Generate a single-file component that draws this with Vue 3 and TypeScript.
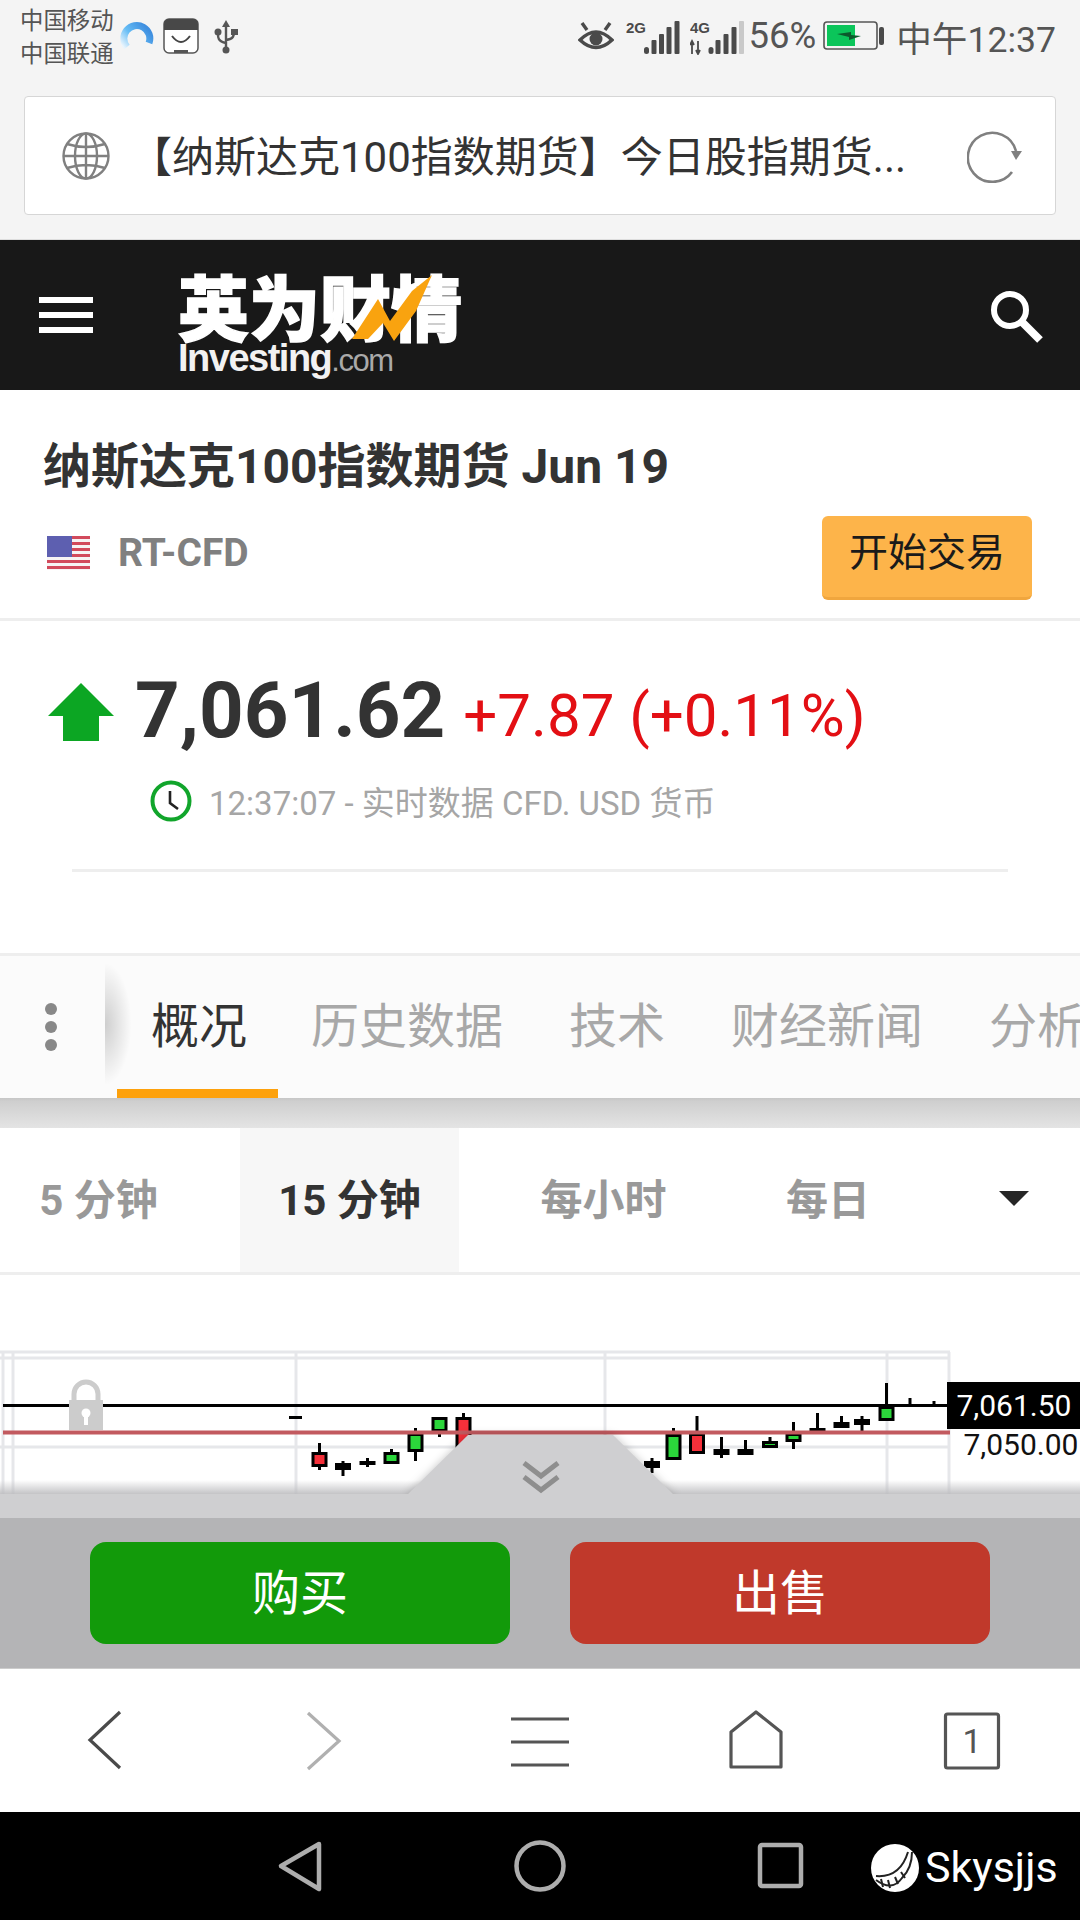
<template>
  <div class="page">
    <div class="top">
      <div class="status">
        <div class="status__left">
          <div class="carrier"><span>中国移动</span><span>中国联通</span></div>
          <svg class="ic-spin" width="34" height="36" viewBox="0 0 34 36">
            <defs>
              <linearGradient id="spin" x1="0" y1="1" x2="1" y2="0.3">
                <stop offset="0" stop-color="#e8f4fd" />
                <stop offset="0.45" stop-color="#66bdf5" />
                <stop offset="1" stop-color="#3f8fe0" />
              </linearGradient>
            </defs>
            <path d="M7 29 A13 13 0 1 1 29 25" fill="none" stroke="url(#spin)" stroke-width="7" />
          </svg>
          <svg class="ic-bag" width="36" height="36" viewBox="0 0 36 36">
            <rect x="1" y="1" width="34" height="34" rx="5" fill="#fff" stroke="#555" stroke-width="1.5" />
            <path d="M1 12 V6 a5 5 0 0 1 5 -5 h24 a5 5 0 0 1 5 5 v6 z" fill="#484848" />
            <path d="M9 18 Q18 30 27 18" fill="none" stroke="#444" stroke-width="2" />
            <rect x="11" y="32" width="14" height="3" fill="#555" />
          </svg>
          <svg class="ic-usb" width="24" height="34" viewBox="0 0 24 34">
            <path d="M12 5 V29 M12 23 C3 21 4 17 4 12 M12 20 C20 19 20 15 20 12" fill="none" stroke="#555" stroke-width="2.4" />
            <path d="M12 0 L16 7 H8 z" fill="#555" />
            <circle cx="4" cy="12" r="3.5" fill="#555" />
            <rect x="17" y="9" width="7" height="6" fill="#555" />
            <circle cx="12" cy="30" r="3.5" fill="#555" />
          </svg>
        </div>
        <div class="status__right">
          <svg class="ic-eye" width="36" height="32" viewBox="0 0 36 32">
            <path d="M2 20 Q18 4 34 20 Q18 35 2 20 z" fill="none" stroke="#4a4a4a" stroke-width="3.4" />
            <circle cx="18" cy="19" r="6.5" fill="#4a4a4a" />
            <path d="M4 3 L9 10 M32 3 L27 10" stroke="#4a4a4a" stroke-width="3.4" />
          </svg>
          <svg class="ic-sig" width="54" height="36" viewBox="0 0 54 36">
            <text x="0" y="14" class="sig-label">2G</text>
            <rect x="18" y="28" width="5" height="7" rx="2.5" fill="#4a4a4a" />
            <rect x="25.5" y="21" width="5" height="14" rx="1" fill="#4a4a4a" />
            <rect x="33" y="15" width="5" height="20" rx="1" fill="#4a4a4a" />
            <rect x="40.5" y="8" width="5" height="27" rx="1" fill="#4a4a4a" />
            <rect x="48.5" y="2" width="5" height="33" rx="1" fill="#4a4a4a" />
          </svg>
          <svg class="ic-sig ic-sig--b" width="54" height="36" viewBox="0 0 54 36">
            <text x="0" y="14" class="sig-label">4G</text>
            <path d="M2 35 V23 M0 26 L2 22 L4 26 M8 22 V34 M6 31 L8 35 L10 31" fill="none" stroke="#4a4a4a" stroke-width="1.8" />
            <rect x="18.5" y="28" width="5" height="7" rx="2.5" fill="#4a4a4a" />
            <rect x="25.5" y="21" width="5" height="14" rx="1" fill="#4a4a4a" />
            <rect x="33.5" y="15" width="5" height="20" rx="1" fill="#4a4a4a" />
            <rect x="41.5" y="8" width="5" height="27" rx="1" fill="#4a4a4a" />
            <rect x="49" y="2" width="5" height="33" rx="1" fill="#c9c9c9" />
          </svg>
          <span class="pct">56%</span>
          <svg class="ic-bat" width="62" height="30" viewBox="0 0 62 30">
            <rect x="1" y="1" width="53" height="27" rx="3" fill="none" stroke="#555" stroke-width="1.6" />
            <rect x="4" y="4" width="28" height="21" fill="#0bc55a" />
            <path d="M14 13 L28 11 L28 14 L38 15 L26 19 L26 16 z" fill="#0c5a2c" />
            <rect x="56" y="6" width="5" height="18" rx="2" fill="#4a4a4a" />
          </svg>
          <span class="clock-text">中午12:37</span>
        </div>
      </div>
      <div class="urlbar">
        <svg class="ic-globe" width="48" height="48" viewBox="0 0 48 48">
          <g fill="none" stroke="#808080" stroke-width="2.4">
            <circle cx="24" cy="24" r="22.5" />
            <ellipse cx="24" cy="24" rx="11" ry="22.5" />
            <path d="M24 1.5 V46.5 M1.5 24 H46.5 M5 12 Q24 18 43 12 M5 36 Q24 30 43 36" />
          </g>
        </svg>
        <span class="urlbar__text">【纳斯达克100指数期货】今日股指期货...</span>
        <svg class="ic-refresh" width="56" height="54" viewBox="0 0 56 54">
          <path d="M49 22 A24.5 24.5 0 1 0 45 43" fill="none" stroke="#808080" stroke-width="2.6" />
          <path d="M44 22 H55 L49 31 z" fill="#808080" />
        </svg>
      </div>
    </div>

    <header class="brand">
      <div class="burger"><i></i><i></i><i></i></div>
      <div class="logo">
        <div class="logo__cn">英为财情</div>
        <svg class="logo__bolt" width="84" height="68" viewBox="0 0 84 68">
          <path d="M0 64 L26 24 L38 46 L60 16 L80 0 L64 36 L42 66 L31 48 L16 64 z" fill="#f9a30f" />
        </svg>
        <div class="logo__en">Investing<small>.com</small></div>
      </div>
      <svg class="ic-search" width="54" height="54" viewBox="0 0 54 54">
        <circle cx="20" cy="20" r="16" fill="none" stroke="#fff" stroke-width="6" />
        <path d="M31 31 L50 50" stroke="#fff" stroke-width="8" />
      </svg>
    </header>

    <section class="inst">
      <h1 class="inst__title">纳斯达克100指数期货 Jun 19</h1>
      <div class="inst__row">
        <svg class="flag" width="43" height="34" viewBox="0 0 43 34">
          <rect width="43" height="34" fill="#f6f3f4" />
          <rect v-for="y in [0, 6, 12, 18, 24, 30]" :key="y" :y="y" width="43" height="3" fill="#d24a5c" />
          <rect width="25" height="21" fill="#5d5fb0" />
        </svg>
        <span class="inst__type">RT-CFD</span>
        <button class="trade">开始交易</button>
      </div>
    </section>

    <section class="quote">
      <div class="quote__main">
        <svg class="arrow" width="66" height="58" viewBox="0 0 66 58">
          <path d="M33 0 L66 33 H51 V58 H15 V33 H0 z" fill="#0ca623" />
        </svg>
        <span class="quote__price">7,061.62</span>
        <span class="quote__chg">+7.87 (+0.11%)</span>
      </div>
      <div class="quote__time">
        <svg width="42" height="42" viewBox="0 0 42 42">
          <circle cx="21" cy="21" r="18.5" fill="#fff" stroke="#11a52b" stroke-width="4" />
          <path d="M20 11 V23 L28 29" fill="none" stroke="#222" stroke-width="2.6" />
        </svg>
        <span>12:37:07 - 实时数据 CFD. USD 货币</span>
      </div>
      <div class="quote__rule"></div>
    </section>

    <nav class="tabs">
      <div class="tabs__more"><i></i><i></i><i></i></div>
      <div v-for="t in tabs" :key="t" class="tab" :class="{ 'tab--on': t === '概况' }">{{ t }}</div>
    </nav>
    <div class="tabs__shade"></div>

    <div class="periods">
      <div
        v-for="p in periods"
        :key="p.label"
        class="period"
        :class="{ 'period--on': p.active }"
        :style="{ width: p.width + 'px' }"
      >{{ p.label }}</div>
      <div class="periods__caret"></div>
    </div>

    <div class="chart">
      <svg width="1080" height="219" viewBox="0 1275 1080 219">
        <defs>
          <linearGradient id="fade" x1="0" y1="0" x2="0" y2="1">
            <stop offset="0" stop-color="#bdbdc0" stop-opacity="0" />
            <stop offset="1" stop-color="#bdbdc0" stop-opacity="0.9" />
          </linearGradient>
        </defs>
        <g stroke="#e6e7ea" stroke-width="3">
          <path d="M0 1352 H950 M0 1358 H950 M0 1447 H950" fill="none" />
          <path v-for="x in gridX" :key="x" :d="`M${x} 1352 V1494`" fill="none" />
        </g>
        <path d="M3 1405.5 H950" stroke="#000" stroke-width="3" />
        <g>
          <path d="M69 1402 V1400 H103 V1430 H69 z" fill="#ccc" />
          <path d="M74 1402 V1394 a12 12 0 0 1 24 0 V1402" fill="none" stroke="#ccc" stroke-width="5" />
          <circle cx="86" cy="1413" r="4.5" fill="#fff" />
          <rect x="84" y="1414" width="4" height="11" fill="#fff" />
        </g>
        <rect x="289" y="1416" width="13" height="3" fill="#000" />
        <g v-for="c in candles" :key="c.x">
          <path :d="`M${c.x} ${c.hi} V${c.lo}`" stroke="#000" stroke-width="3" />
          <rect
            :x="c.x - 6.5"
            :y="c.top + 1.5"
            width="13"
            :height="c.bot - c.top - 3"
            :fill="c.fill"
            stroke="#000"
            stroke-width="3"
          />
        </g>
        <path d="M3 1432.5 H950" stroke="#c25a5f" stroke-width="4" />
        <rect x="0" y="1480" width="1080" height="14" fill="url(#fade)" />
        <path class="notch" d="M406 1496 L468 1435 H613 L675 1496 z" fill="#cfcfd1" />
        <path d="M524 1463 L541 1476 L558 1463 M524 1477 L541 1490 L558 1477" fill="none" stroke="#8e8e8e" stroke-width="5" />
        <rect x="947" y="1382" width="133" height="47" fill="#000" />
        <text x="1014" y="1416" text-anchor="middle" class="axis axis--on">7,061.50</text>
        <text x="1021" y="1455" text-anchor="middle" class="axis">7,050.00</text>
      </svg>
    </div>
    <div class="band"></div>

    <div class="actions">
      <button class="act act--buy">购买</button>
      <button class="act act--sell">出售</button>
    </div>

    <div class="browser">
      <svg width="1080" height="144" viewBox="0 1668 1080 144">
        <g fill="none" stroke-width="3.2">
          <path d="M120 1711 L90 1739 L120 1767" stroke="#4a4a4a" />
          <path d="M308 1712 L339 1740 L308 1768" stroke="#b0b0b0" />
          <path d="M511 1718 H569 M511 1741 H569 M511 1764 H569" stroke="#555" />
          <path d="M731 1766 V1731 L756 1711 L781 1731 V1766 z" stroke="#555" stroke-linejoin="round" />
          <rect x="945.5" y="1713" width="53" height="54" rx="2" stroke="#555" />
        </g>
        <text x="972" y="1752" text-anchor="middle" class="tabcount">1</text>
      </svg>
    </div>

    <div class="sysnav">
      <svg width="1080" height="108" viewBox="0 1812 1080 108">
        <g fill="none" stroke="#adadad" stroke-width="4.5" stroke-linejoin="round">
          <path d="M319 1844 L281 1866 L319 1889 z" />
          <circle cx="540" cy="1866" r="23.5" />
          <rect x="760" y="1845" width="41" height="41" rx="2" />
        </g>
        <circle cx="895" cy="1868" r="24" fill="#fff" />
        <path d="M876 1876 Q900 1878 908 1852" fill="none" stroke="#222" stroke-width="2" />
        <path d="M876 1880 Q892 1892 902 1878 Q912 1868 912 1852" fill="none" stroke="#222" stroke-width="2" />
        <path d="M881 1879 L883 1887 M888 1880 L890 1888 M895 1877 L898 1884 M901 1872 L905 1878" stroke="#222" stroke-width="2" />
        <text x="925" y="1882" class="mark">Skysjjs</text>
      </svg>
    </div>
  </div>
</template>

<script setup lang="ts">
  type Candle = { x: number; hi: number; top: number; bot: number; lo: number; fill: string }

  const RED = "#f5303a"
  const GREEN = "#2bd63b"
  const BLACK = "#000"

  const tabs = ["概况", "历史数据", "技术", "财经新闻", "分析"]

  const periods = [
    { label: "5 分钟", width: 240, active: false },
    { label: "15 分钟", width: 219, active: true },
    { label: "每小时", width: 289, active: false },
    { label: "每日", width: 160, active: false },
  ]

  const gridX = [3, 13, 296, 605, 887, 949]

  const candles: Candle[] = [
    { x: 319.5, hi: 1443, top: 1452, bot: 1467, lo: 1470, fill: RED },
    { x: 343, hi: 1461, top: 1463, bot: 1470, lo: 1476, fill: BLACK },
    { x: 367.5, hi: 1458, top: 1461, bot: 1465, lo: 1467, fill: BLACK },
    { x: 391.5, hi: 1449, top: 1452, bot: 1464, lo: 1464, fill: GREEN },
    { x: 415.5, hi: 1428, top: 1433, bot: 1452, lo: 1461, fill: GREEN },
    { x: 439.5, hi: 1417, top: 1417, bot: 1432, lo: 1437, fill: GREEN },
    { x: 463.5, hi: 1413, top: 1417, bot: 1452, lo: 1452, fill: RED },
    { x: 652, hi: 1458, top: 1461, bot: 1468, lo: 1473, fill: BLACK },
    { x: 673.5, hi: 1428, top: 1434, bot: 1460, lo: 1460, fill: GREEN },
    { x: 697, hi: 1416, top: 1433, bot: 1454, lo: 1454, fill: RED },
    { x: 721.5, hi: 1437, top: 1449, bot: 1455, lo: 1458, fill: BLACK },
    { x: 745.5, hi: 1440, top: 1449, bot: 1455, lo: 1455, fill: BLACK },
    { x: 770, hi: 1437, top: 1441, bot: 1448, lo: 1448, fill: GREEN },
    { x: 793.5, hi: 1422, top: 1433, bot: 1442, lo: 1449, fill: GREEN },
    { x: 817.5, hi: 1413, top: 1428, bot: 1432, lo: 1432, fill: BLACK },
    { x: 841.5, hi: 1416, top: 1422, bot: 1428, lo: 1428, fill: BLACK },
    { x: 862, hi: 1416, top: 1419, bot: 1425, lo: 1431, fill: BLACK },
    { x: 886.5, hi: 1383, top: 1406, bot: 1421, lo: 1421, fill: GREEN },
    { x: 910, hi: 1398, top: 1404, bot: 1407, lo: 1407, fill: BLACK },
    { x: 934, hi: 1401, top: 1404, bot: 1407, lo: 1407, fill: BLACK },
  ]
</script>

<style>
  html,
  body {
    margin: 0;
    background: #fff;
  }
</style>

<style scoped>
  .page {
    width: 1080px;
    height: 1920px;
    overflow: hidden;
    display: flex;
    flex-direction: column;
    font-family: Roboto, "Noto Sans CJK SC", sans-serif;
    color: #333;
    background: #fff;
  }

  svg {
    display: block;
    flex: none;
  }

  .top {
    height: 240px;
    box-sizing: border-box;
    background: #f4f4f4;
    border-bottom: 1px solid #ddd;
  }

  .status {
    height: 96px;
    display: flex;
    justify-content: space-between;
    padding: 3px 24px 0 20px;
    box-sizing: border-box;
    color: #555;
  }

  .status__left {
    display: flex;
    align-items: flex-start;
  }

  .carrier {
    width: 100px;
    margin-top: 2px;
    display: flex;
    flex-direction: column;
    font-size: 23.4px;
    line-height: 33px;
    white-space: nowrap;
  }

  .ic-spin {
    margin: 15px 0 0 0;
  }

  .ic-bag {
    margin: 15px 0 0 9px;
  }

  .ic-usb {
    margin: 17px 0 0 15px;
  }

  .status__right {
    display: flex;
    align-items: flex-start;
  }

  .ic-eye {
    margin: 17px 0 0 0;
  }

  .ic-sig {
    margin: 16px 0 0 12px;
  }

  .ic-sig--b {
    margin-left: 10px;
  }

  .sig-label {
    font: 700 15px "Liberation Sans", sans-serif;
    fill: #4a4a4a;
  }

  .pct {
    margin: 11px 0 0 4px;
    font-size: 36.5px;
    line-height: 44px;
  }

  .ic-bat {
    margin: 18px 0 0 7px;
  }

  .clock-text {
    margin: 13px 0 0 11px;
    font-size: 35.6px;
    line-height: 48px;
    white-space: nowrap;
  }

  .urlbar {
    height: 119px;
    margin: 0 24px;
    box-sizing: border-box;
    display: flex;
    align-items: center;
    background: #fff;
    border: 1px solid #d6d6d6;
    border-radius: 4px;
    padding: 0 0 0 37px;
  }

  .urlbar__text {
    width: 833px;
    margin-left: 20px;
    padding-bottom: 5px;
    font-size: 42px;
    white-space: nowrap;
    color: #333;
  }

  .ic-refresh {
    margin-left: 4px;
  }

  .brand {
    height: 150px;
    flex: none;
    display: flex;
    align-items: center;
    background: #181818;
    position: relative;
  }

  .burger {
    margin-left: 39px;
    width: 54px;
    display: flex;
    flex-direction: column;
    gap: 9px;
  }

  .burger i {
    display: block;
    height: 6px;
    background: #fff;
  }

  .logo {
    margin-left: 85px;
    width: 300px;
    position: relative;
    padding-top: 14px;
  }

  .logo__cn {
    font-family: "Noto Sans CJK SC", sans-serif;
    font-size: 71px;
    font-weight: 900;
    line-height: 74px;
    color: #fff;
    -webkit-text-stroke: 1.5px #fff;
    white-space: nowrap;
  }

  .logo__bolt {
    position: absolute;
    left: 174px;
    top: 22px;
  }

  .logo__en {
    font-family: "Liberation Sans", sans-serif;
    font-size: 38px;
    font-weight: 700;
    line-height: 34px;
    letter-spacing: -1.5px;
    color: #f2f2f2;
    white-space: nowrap;
  }

  .logo__en small {
    font-size: 31px;
    font-weight: 400;
    color: #aaa;
  }

  .ic-search {
    position: absolute;
    left: 990px;
    top: 50px;
  }

  .inst {
    height: 231px;
    flex: none;
    box-sizing: border-box;
    padding: 48px 0 0 43px;
    border-bottom: 3px solid #eee;
  }

  .inst__title {
    margin: 0;
    font-size: 48px;
    font-weight: 700;
    line-height: 58px;
    color: #333;
    white-space: nowrap;
  }

  .inst__row {
    display: flex;
    align-items: center;
    margin-top: 20px;
    padding-right: 48px;
  }

  .flag {
    margin: 0 0 10px 4px;
  }

  .inst__type {
    margin: 0 0 10px 28px;
    font-size: 39px;
    font-weight: 700;
    color: #808080;
  }

  .trade {
    margin-left: auto;
    width: 210px;
    height: 84px;
    padding: 0 0 15px;
    border: 0;
    border-bottom: 3px solid #f0a63e;
    border-radius: 6px;
    background: #fdb44a;
    color: #1a1a1a;
    font-family: inherit;
    font-size: 39px;
  }

  .quote {
    height: 335px;
    flex: none;
    box-sizing: border-box;
    padding-top: 44px;
    border-bottom: 3px solid #eee;
  }

  .quote__main {
    display: flex;
    align-items: center;
    height: 90px;
    padding-left: 48px;
  }

  .arrow {
    margin-top: 4px;
  }

  .quote__price {
    margin-left: 21px;
    font-size: 78px;
    font-weight: 700;
    color: #333;
  }

  .quote__chg {
    margin: 10px 0 0 18px;
    font-size: 60px;
    color: #e30f14;
    white-space: nowrap;
  }

  .quote__time {
    display: flex;
    align-items: center;
    margin: 22px 0 0 150px;
    gap: 17px;
    font-size: 33px;
    color: #a6a6a6;
    white-space: nowrap;
  }

  .quote__rule {
    margin: 44px 72px 0;
    height: 3px;
    background: #eee;
  }

  .tabs {
    height: 142px;
    flex: none;
    display: flex;
    align-items: flex-start;
    background: #fbfbfb;
    white-space: nowrap;
    overflow: hidden;
    box-sizing: border-box;
  }

  .tabs__more {
    width: 105px;
    height: 142px;
    flex: none;
    display: flex;
    flex-direction: column;
    align-items: center;
    justify-content: center;
    gap: 6px;
    box-sizing: border-box;
    padding-right: 3px;
    position: relative;
  }

  .tabs__more::after {
    content: "";
    position: absolute;
    left: 100%;
    top: 8px;
    width: 26px;
    height: 120px;
    background: radial-gradient(ellipse at left center, rgba(0, 0, 0, 0.18), transparent 72%);
  }

  .tabs__more i {
    width: 12px;
    height: 12px;
    border-radius: 50%;
    background: #888;
  }

  .tab {
    flex: none;
    height: 142px;
    box-sizing: border-box;
    padding: 0 33px;
    font-size: 48px;
    line-height: 142px;
    color: #a8a8a8;
  }

  .tab:nth-child(2) {
    margin-left: 12px;
    padding: 0 31px 0 34px;
    color: #333;
  }

  .tab--on {
    border-bottom: 9px solid #fda10c;
  }

  .tabs__shade {
    height: 30px;
    flex: none;
    background: linear-gradient(#c6c6c6, #cfcfcf 12%, #e4e4e4);
  }

  .periods {
    height: 147px;
    flex: none;
    display: flex;
    box-sizing: border-box;
    border-bottom: 3px solid #eee;
    position: relative;
  }

  .period {
    flex: none;
    line-height: 145px;
    font-size: 42px;
    font-weight: 700;
    color: #999;
    text-align: center;
    box-sizing: border-box;
  }

  .period:first-child {
    padding-right: 43px;
  }

  .period--on {
    background: #f7f7f7;
    color: #333;
  }

  .periods__caret {
    position: absolute;
    left: 999px;
    top: 63px;
    border-style: solid;
    border-width: 15px 15px 0;
    border-color: #262626 transparent transparent;
  }

  .chart {
    height: 219px;
    flex: none;
  }

  .notch {
    filter: drop-shadow(0 0 4px rgba(0, 0, 0, 0.22));
  }

  .axis {
    font: 400 30px Roboto, sans-serif;
    fill: #111;
  }

  .axis--on {
    fill: #fff;
  }

  .band {
    height: 24px;
    flex: none;
    background: #cfcfd1;
  }

  .actions {
    height: 151px;
    flex: none;
    box-sizing: border-box;
    background: #b4b4b6;
    display: flex;
    justify-content: center;
    align-items: center;
    gap: 60px;
    border-bottom: 1px solid #ccc;
  }

  .act {
    width: 420px;
    height: 102px;
    border: 0;
    padding: 0 0 8px;
    border-radius: 16px;
    color: #fff;
    font-family: inherit;
    font-size: 48px;
  }

  .act--buy {
    background: #129a0a;
  }

  .act--sell {
    background: #c0392b;
  }

  .browser {
    height: 143px;
    flex: none;
    background: #fff;
  }

  .tabcount {
    font: 400 34px Roboto, sans-serif;
    fill: #555;
  }

  .sysnav {
    height: 108px;
    flex: none;
    background: #000;
  }

  .mark {
    font: 400 43px Roboto, sans-serif;
    fill: #fff;
  }
</style>
